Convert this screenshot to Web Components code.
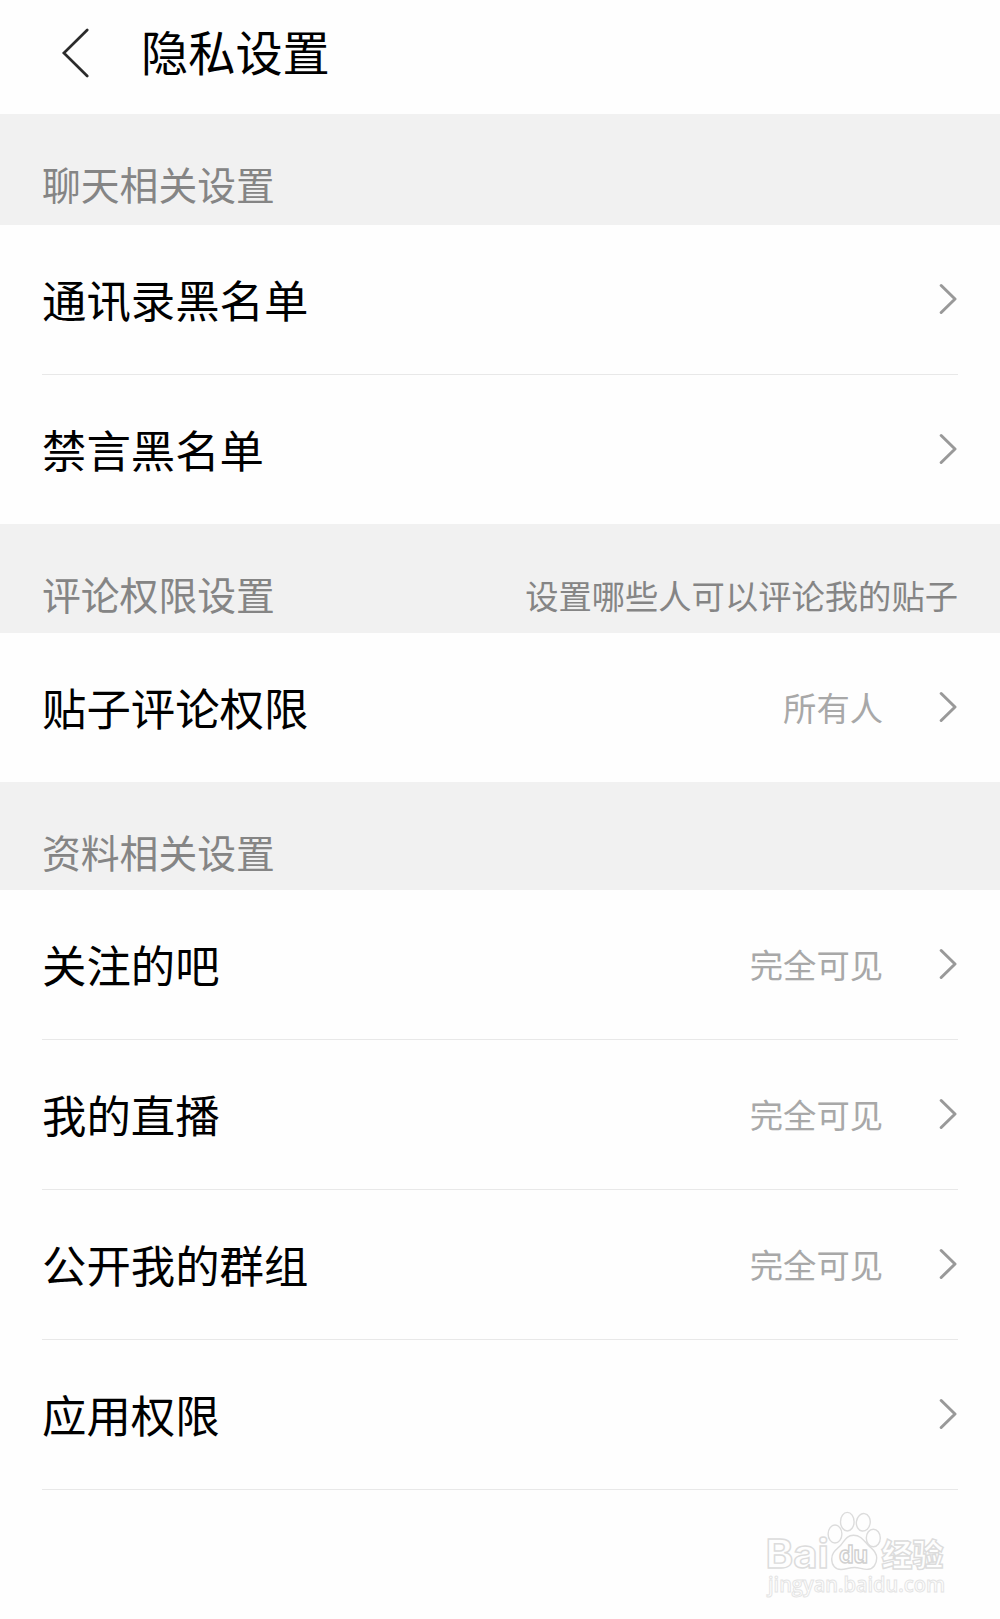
<!DOCTYPE html>
<html lang="zh-CN">
<head>
<meta charset="utf-8">
<title>隐私设置</title>
<style>
  body {
    margin: 0;
    background: #fefefe;
    font-family: "Noto Sans CJK SC", "Noto Sans", sans-serif;
    color: #000;
  }
</style>
</head>
<body>
<settings-page>
  <nav-header>隐私设置</nav-header>
  <settings-section style="--band: 111px; --base: 17px" label="聊天相关设置">
    <settings-row>通讯录黑名单</settings-row>
    <settings-row last>禁言黑名单</settings-row>
  </settings-section>
  <settings-section style="--band: 109px; --base: 15px" label="评论权限设置" note="设置哪些人可以评论我的贴子">
    <settings-row last value="所有人">贴子评论权限</settings-row>
  </settings-section>
  <settings-section style="--band: 108px; --base: 14px" label="资料相关设置">
    <settings-row value="完全可见">关注的吧</settings-row>
    <settings-row value="完全可见">我的直播</settings-row>
    <settings-row value="完全可见">公开我的群组</settings-row>
    <settings-row>应用权限</settings-row>
  </settings-section>
  <site-mark slot="footer"></site-mark>
</settings-page>

<script>
class SettingsPage extends HTMLElement {
  constructor() {
    super();
    this.attachShadow({ mode: "open" });
    this.shadowRoot.innerHTML = `
      <style>
        :host {
          display: flex;
          flex-direction: column;
          height: 1619px;
          overflow: hidden;
        }
        footer {
          display: flex;
          justify-content: flex-end;
          padding: 10px 40px 0 0;
        }
      </style>
      <slot></slot>
      <footer><slot name="footer"></slot></footer>
    `;
  }
}

class NavHeader extends HTMLElement {
  constructor() {
    super();
    this.attachShadow({ mode: "open" });
    this.shadowRoot.innerHTML = `
      <style>
        :host {
          display: flex;
          align-items: center;
          box-sizing: border-box;
          height: 114px;
          padding: 0 61px 9px;
        }
        svg { display: block; margin-right: 52px; }
        h1 {
          margin: 0;
          padding-bottom: 3px;
          font-size: 47.2px;
          line-height: 60px;
          font-weight: 400;
        }
      </style>
      <svg width="28" height="50" viewBox="0 0 28 50" fill="none" stroke="#2b2b2b" stroke-width="2.7">
        <path d="M26.2 2 2.900 25 26.2 48" stroke-linecap="round"/>
      </svg>
      <h1><slot></slot></h1>
    `;
  }
}

class SettingsSection extends HTMLElement {
  constructor() {
    super();
    this.attachShadow({ mode: "open" });
    this.shadowRoot.innerHTML = `
      <style>
        :host { display: block; }
        header {
          display: flex;
          justify-content: space-between;
          align-items: flex-end;
          box-sizing: border-box;
          height: var(--band);
          padding: 0 42px var(--base);
          background: #f1f1f1;
          color: #858585;
          line-height: 50px;
        }
        .label { font-size: 38.8px; }
        .note { font-size: 33.3px; margin-bottom: -2px; }
      </style>
      <header><span class="label"></span><span class="note"></span></header>
      <slot></slot>
    `;
  }
  connectedCallback() {
    this.shadowRoot.querySelector(".label").textContent = this.getAttribute("label");
    this.shadowRoot.querySelector(".note").textContent = this.getAttribute("note") || "";
  }
}

class SettingsRow extends HTMLElement {
  constructor() {
    super();
    this.attachShadow({ mode: "open" });
    this.shadowRoot.innerHTML = `
      <style>
        :host {
          display: flex;
          align-items: center;
          box-sizing: border-box;
          height: 150px;
          margin: 0 42px;
          border-bottom: 1px solid #e8e8e8;
        }
        :host([last]) { height: 149px; border-bottom: 0; }
        .name {
          flex: 1;
          padding-bottom: 2px;
          font-size: 44.4px;
          line-height: 60px;
        }
        .value {
          padding-bottom: 2px;
          margin-right: 56px;
          font-size: 33.3px;
          line-height: 50px;
          color: #a8a8a8;
        }
        svg { display: block; margin: 0 1px 1px 0; }
      </style>
      <span class="name"><slot></slot></span>
      <span class="value"></span>
      <svg width="18" height="32" viewBox="0 0 18 32" fill="none" stroke="#999" stroke-width="3">
        <path d="M2.2 2.5 16 16 2.2 29.5" stroke-linecap="round" stroke-linejoin="round"/>
      </svg>
    `;
  }
  connectedCallback() {
    this.shadowRoot.querySelector(".value").textContent = this.getAttribute("value") || "";
  }
}

// outlined paw logo with the site address below it
class SiteMark extends HTMLElement {
  constructor() {
    super();
    this.attachShadow({ mode: "open" });
    this.shadowRoot.innerHTML = `
      <style>
        :host { display: block; }
        svg { display: block; }
        text { font-family: Inter, "Liberation Sans", sans-serif; font-weight: 700; }
        .cjk { font-family: "Noto Sans CJK SC", sans-serif; font-weight: 900; }
        .url { font-family: "Open Sans", sans-serif; font-weight: 600; }
      </style>
      <svg width="200" height="110" viewBox="0 0 200 110" fill="#fefefe" stroke="#dcdcdc" stroke-width="1.4">
        <text x="5.5" y="68" font-size="39.5" textLength="63.5" lengthAdjust="spacingAndGlyphs">Bai</text>
        <ellipse cx="75" cy="34" rx="6.9" ry="9"/>
        <ellipse cx="87.3" cy="21.7" rx="6.8" ry="9.3"/>
        <ellipse cx="103.3" cy="22.3" rx="6.9" ry="8.8" transform="rotate(8 103.3 22.3)"/>
        <ellipse cx="113.3" cy="38" rx="7" ry="8.8"/>
        <path d="M93.5 35.3C86.5 35.3 84.5 41 80.5 45.5C76 50 71.7 52.5 71.7 59C71.7 65.5 75.5 69.5 81 69.5C86 69.5 89 67.5 94.5 67.5C99.500 67.5 103 69.7 108 69.3C113.5 69 116.7 64 116.7 58C116.7 52 112.5 49.5 108.5 45.5C104 41 101 35.3 93.5 35.3Z"/>
        <text x="79" y="63" font-size="24" textLength="29" lengthAdjust="spacingAndGlyphs" stroke="#d0d0d0">du</text>
        <text class="cjk" x="121.5" y="65.5" font-size="31" textLength="62" lengthAdjust="spacingAndGlyphs">经验</text>
        <text class="url" x="8" y="92" font-size="21" textLength="177" lengthAdjust="spacingAndGlyphs" stroke="#e4e4e4" stroke-width="1">jingyan.baidu.com</text>
      </svg>
    `;
  }
}

customElements.define("settings-page", SettingsPage);
customElements.define("nav-header", NavHeader);
customElements.define("settings-section", SettingsSection);
customElements.define("settings-row", SettingsRow);
customElements.define("site-mark", SiteMark);
</script>
</body>
</html>
